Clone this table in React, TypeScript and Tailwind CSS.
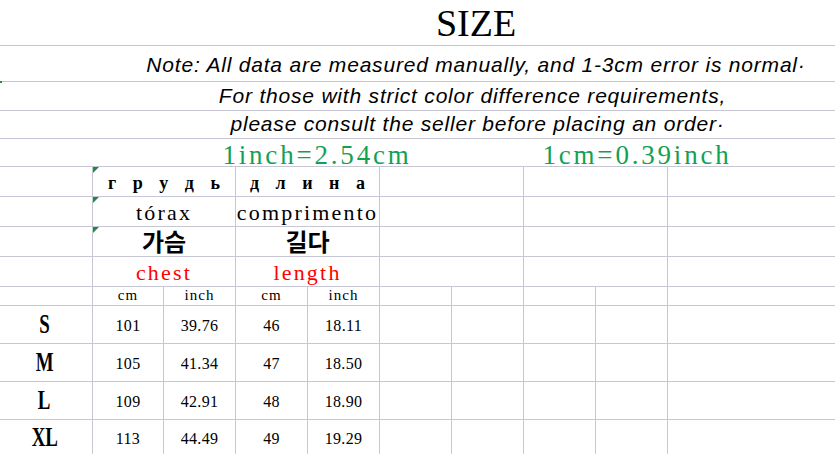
import React from 'react';

const line = 'border-[#c6c6d4]';
const hand = "font-['Liberation_Sans',sans-serif] italic text-[21px] leading-none tracking-[0.8px] text-black";
const song = "font-['Liberation_Serif',serif]";

interface SizeRow {
  size: string;
  chestCm: string;
  chestIn: string;
  lenCm: string;
  lenIn: string;
}

const rows: SizeRow[] = [
  { size: 'S', chestCm: '101', chestIn: '39.76', lenCm: '46', lenIn: '18.11' },
  { size: 'M', chestCm: '105', chestIn: '41.34', lenCm: '47', lenIn: '18.50' },
  { size: 'L', chestCm: '109', chestIn: '42.91', lenCm: '48', lenIn: '18.90' },
  { size: 'XL', chestCm: '113', chestIn: '44.49', lenCm: '49', lenIn: '19.29' },
];

// little green "number stored as text" mark in the cell corner
const Flag = () => (
  <span className="absolute left-0 top-0 w-0 h-0 border-t-[6px] border-r-[6px] border-t-[#1e8c3c] border-r-transparent" />
);

const HeadRow = ({
  flag,
  left,
  right,
}: {
  flag?: boolean;
  left: React.ReactNode;
  right: React.ReactNode;
}) => (
  <>
    <div className={`border-r border-b ${line}`} />
    <div className={`relative col-span-2 border-r border-b ${line} flex items-end justify-center whitespace-nowrap`}>
      {flag && <Flag />}
      {left}
    </div>
    <div className={`col-span-2 border-r border-b ${line} flex items-end justify-center whitespace-nowrap`}>{right}</div>
    <div className={`col-span-2 border-r border-b ${line}`} />
    <div className={`col-span-2 border-r border-b ${line}`} />
    <div className={`border-b ${line}`} />
  </>
);

export default function App() {
  const cyr = `${song} font-bold text-[18px] leading-none tracking-[6px] pb-[4px] pl-[6px]`;
  const mono = `${song} text-[22px] leading-[20px] tracking-[2.2px] pb-[3px]`;
  const kor = "font-['Noto_Sans_CJK_KR',sans-serif] font-bold text-[24px] leading-[24px] pb-[3px]";
  const num = `${song} text-[16px] leading-none tracking-[0.3px] text-black pt-[2px]`;

  return (
    <div className="w-[835px] h-[454px] overflow-hidden bg-white">
      <div className="grid grid-cols-[93px_71px_72px_72px_72px_72px_72px_72px_72px_1fr] grid-rows-[46px_36px_29px_28px_28px_30px_30px_30px_30px_19px_38px_38px_38px_35px] text-black">
        {/* title */}
        <div className={`col-span-10 border-b ${line} flex items-end justify-center pl-[117px] pb-[3px]`}>
          <span className="font-['Liberation_Serif',serif] text-[38px] leading-none">SIZE</span>
        </div>

        <div className={`relative col-span-10 border-b ${line} flex items-end justify-center pl-[117px] pb-[6px]`}>
          <span className="absolute left-0 bottom-[-2px] w-[2px] h-[2px] bg-[#1e8c3c]" />
          <span className={hand}>Note: All data are measured manually, and 1-3cm error is normal·</span>
        </div>

        <div className={`col-span-10 border-b ${line} flex items-end justify-center pl-[110px] pb-[4px]`}>
          <span className={hand}>For those with strict color difference requirements,</span>
        </div>

        <div className={`col-span-10 border-b ${line} flex items-end justify-center pl-[120px] pb-[4px]`}>
          <span className={`${hand} tracking-[0.5px]`}>please consult the seller before placing an order·</span>
        </div>

        {/* unit conversion */}
        <div className={`col-span-10 border-b ${line} flex items-end text-[#12a152] whitespace-nowrap`}>
          <div className="ml-[152px] w-[330px] flex justify-center">
            <span className={`${song} text-[27px] leading-[22px] tracking-[2.8px]`}>1inch=2.54cm</span>
          </div>
          <div className="w-[310px] flex justify-center">
            <span className={`${song} text-[27px] leading-[22px] tracking-[2.8px]`}>1cm=0.39inch</span>
          </div>
        </div>

        {/* column titles in four languages */}
        <HeadRow flag left={<span className={cyr}>г р у д ь</span>} right={<span className={cyr}>д л и н а</span>} />
        <HeadRow flag left={<span className={mono}>tórax</span>} right={<span className={mono}>comprimento</span>} />
        <HeadRow flag left={<span className={kor}>가슴</span>} right={<span className={kor}>길다</span>} />
        <HeadRow
          left={<span className={`${mono} text-[#ff0000]`}>chest</span>}
          right={<span className={`${mono} text-[#ff0000]`}>length</span>}
        />

        {/* units */}
        <div className={`border-r border-b ${line}`} />
        {['cm', 'inch', 'cm', 'inch'].map((u, i) => (
          <div key={i} className={`border-r border-b ${line} flex items-end justify-center pb-[2px]`}>
            <span className={`${song} text-[15px] leading-none tracking-[1px]`}>{u}</span>
          </div>
        ))}
        {[0, 1, 2, 3].map((i) => (
          <div key={'u' + i} className={`border-r border-b ${line}`} />
        ))}
        <div className={`border-b ${line}`} />

        {/* data */}
        {rows.map((r, ri) => {
          const b = ri === rows.length - 1 ? '' : 'border-b';
          return (
            <React.Fragment key={r.size}>
              <div className={`border-r ${b} ${line} flex items-center justify-center pr-[3px]`}>
                <span className="font-['Liberation_Serif',serif] font-bold text-[27px] leading-none inline-block scale-x-[0.7]">
                  {r.size}
                </span>
              </div>
              {[r.chestCm, r.chestIn, r.lenCm, r.lenIn].map((v, vi) => (
                <div key={vi} className={`border-r ${b} ${line} flex items-center justify-center`}>
                  <span className={num}>{v}</span>
                </div>
              ))}
              {[0, 1, 2, 3].map((i) => (
                <div key={'e' + i} className={`border-r ${b} ${line}`} />
              ))}
              <div className={`${b} ${line}`} />
            </React.Fragment>
          );
        })}
      </div>
    </div>
  );
}
